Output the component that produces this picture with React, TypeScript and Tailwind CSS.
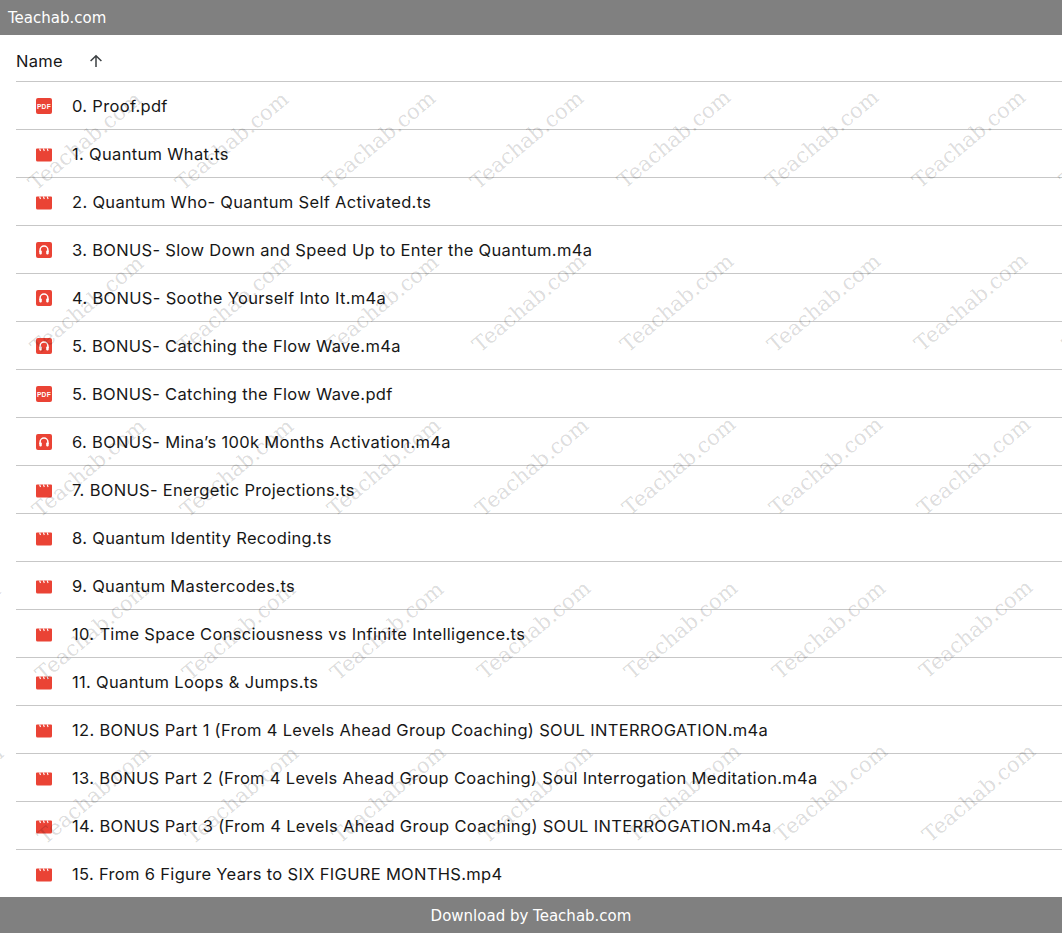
const rows: [string, string][] = [
  ["pdf", "0. Proof.pdf"],
  ["video", "1. Quantum What.ts"],
  ["video", "2. Quantum Who- Quantum Self Activated.ts"],
  ["audio", "3. BONUS- Slow Down and Speed Up to Enter the Quantum.m4a"],
  ["audio", "4. BONUS- Soothe Yourself Into It.m4a"],
  ["audio", "5. BONUS- Catching the Flow Wave.m4a"],
  ["pdf", "5. BONUS- Catching the Flow Wave.pdf"],
  ["audio", "6. BONUS- Mina’s 100k Months Activation.m4a"],
  ["video", "7. BONUS- Energetic Projections.ts"],
  ["video", "8. Quantum Identity Recoding.ts"],
  ["video", "9. Quantum Mastercodes.ts"],
  ["video", "10. Time Space Consciousness vs Infinite Intelligence.ts"],
  ["video", "11. Quantum Loops & Jumps.ts"],
  ["video", "12. BONUS Part 1 (From 4 Levels Ahead Group Coaching) SOUL INTERROGATION.m4a"],
  ["video", "13. BONUS Part 2 (From 4 Levels Ahead Group Coaching) Soul Interrogation Meditation.m4a"],
  ["video", "14. BONUS Part 3 (From 4 Levels Ahead Group Coaching) SOUL INTERROGATION.m4a"],
  ["video", "15. From 6 Figure Years to SIX FIGURE MONTHS.mp4"],
];

function FileIcon({ kind }: { kind: string }) {
  return (
    <svg width="16" height="16" viewBox="0 0 16 16" className="shrink-0">
      {kind === "pdf" && (
        <>
          <rect width="16" height="16" rx="2" fill="#ea4335" />
          <text x="8" y="10.5" textAnchor="middle" fontSize="6.6" fontWeight="700" letterSpacing="0.35" fontFamily="Liberation Sans, sans-serif" fill="#fff">PDF</text>
        </>
      )}
      {kind === "audio" && (
        <>
          <rect width="16" height="16" rx="2" fill="#ea4335" />
          <path d="M4.1 10V8a3.9 3.9 0 0 1 7.8 0v2" fill="none" stroke="#fff" strokeWidth="1.5" />
          <rect x="3.3" y="8.6" width="2.5" height="3.8" rx="0.8" fill="#fff" />
          <rect x="10.2" y="8.6" width="2.5" height="3.8" rx="0.8" fill="#fff" />
        </>
      )}
      {kind === "video" && (
        <>
          <path d="M1 2.5h14a1 1 0 0 1 1 1V14a1.6 1.6 0 0 1-1.6 1.6H1.6A1.6 1.6 0 0 1 0 14V3.5a1 1 0 0 1 1-1z" fill="#ea4335" />
          <path d="M3.6 2.5l.9 2.5M7.4 2.5l.9 2.5M11.2 2.5l.9 2.5" stroke="#fff" strokeWidth="1.1" fill="none" />
        </>
      )}
    </svg>
  );
}

const marks: { x: number; y: number }[] = [];
for (let r = 0; r < 5; r++) {
  for (let c = -1; c < 8; c++) {
    marks.push({ x: 84.5 + 147.4 * c + 2.4 * r, y: 141 + 163.5 * r - 0.4 * c });
  }
}

export default function App() {
  return (
    <div className="relative flex h-[933px] w-full flex-col overflow-hidden bg-white font-['Inter',sans-serif] text-[#171717]">
      <header className="flex h-[35px] shrink-0 items-center bg-[#808080] pl-2 pt-px font-['DejaVu_Sans',sans-serif] text-[15px] text-white">
        Teachab.com
      </header>
      <main className="flex min-h-0 flex-1 flex-col pl-4">
        <div className="flex h-[47px] shrink-0 items-center border-b border-[#c7c7c7] pt-[6px] text-[16.5px] tracking-[0.32px]">
          <span>Name</span>
          <svg width="16" height="16" viewBox="0 0 16 16" className="ml-[25px]" fill="none" stroke="#3c4043" strokeWidth="1.5">
            <path d="M8 14V3M2.6 8L8 2.8 13.4 8" />
          </svg>
        </div>
        {rows.map(([kind, name]) => (
          <div key={name} className="flex h-[48px] shrink-0 items-center border-b border-[#c7c7c7] pl-5 text-[16.5px] tracking-[0.32px]">
            <FileIcon kind={kind} />
            <span className="ml-5 whitespace-nowrap pt-[2px]">{name}</span>
          </div>
        ))}
      </main>
      <footer className="relative z-10 flex h-[36px] shrink-0 items-center justify-center bg-[#808080] pt-[3px] font-['DejaVu_Sans',sans-serif] text-[15px] text-white">
        Download by Teachab.com
      </footer>
      {marks.map((m) => (
        <span
          key={`${m.x}-${m.y}`}
          className="pointer-events-none absolute flex h-[24px] w-[152px] -rotate-[40deg] items-center justify-center whitespace-nowrap font-['DejaVu_Serif',serif] text-[21px] leading-none text-black/15"
          style={{ left: m.x - 76, top: m.y - 12 }}
        >
          Teachab.com
        </span>
      ))}
    </div>
  );
}
